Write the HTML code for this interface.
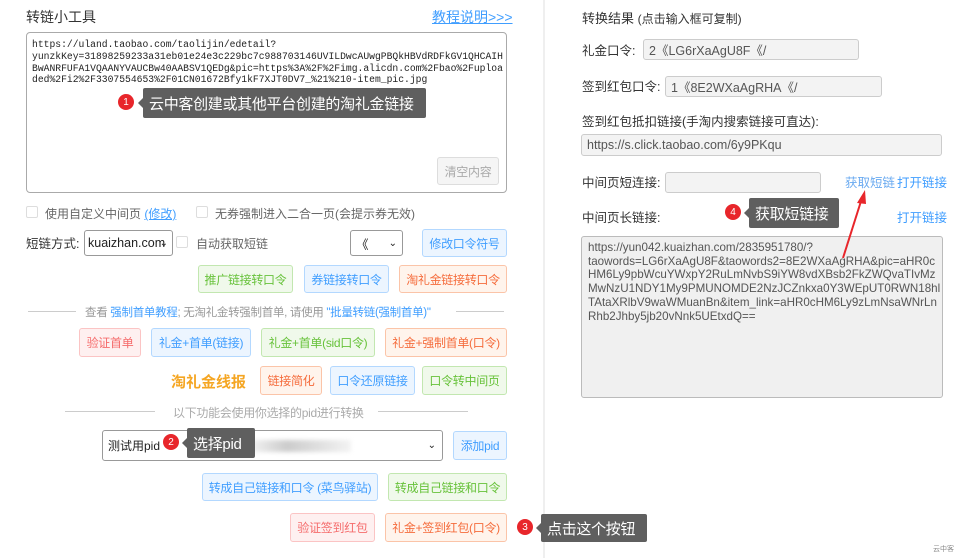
<!DOCTYPE html>
<html><head><meta charset="utf-8"><style>
*{box-sizing:border-box;margin:0;padding:0}
body{width:959px;height:558px;position:relative;background:#fff;font-family:"Liberation Sans","Noto Sans CJK SC",sans-serif;color:#333;font-size:12.5px;overflow:hidden}
.a{position:absolute;white-space:nowrap}
.btn{position:absolute;border:1px solid;border-radius:3px;font-size:12px;display:flex;align-items:center;justify-content:center;white-space:nowrap;letter-spacing:-0.3px}
.g{color:#67c23a;background:#f0f9eb;border-color:#c2e7b0}
.b{color:#409eff;background:#ecf5ff;border-color:#b3d8ff}
.o{color:#f56c3c;background:#fff4ec;border-color:#fbc4a8}
.r{color:#f56c6c;background:#fef0f0;border-color:#fbc4c4}
.tip{position:absolute;background:#5f5f5f;color:#fff;border-radius:2px;display:flex;align-items:center;padding-left:6px;font-size:15px;white-space:nowrap;letter-spacing:-0.3px}
.tip:before{content:"";position:absolute;left:-5px;top:50%;margin-top:-5px;border:5px solid transparent;border-left:0;border-right-color:#5f5f5f}
.dot{position:absolute;width:16px;height:16px;border-radius:50%;background:#e8262b;color:#fff;font-size:10px;display:flex;align-items:center;justify-content:center}
.cb{position:absolute;width:12px;height:12px;border:1px solid #ddd;border-radius:2px}
.inp{position:absolute;background:#f3f3f3;border:1px solid #ccc;border-radius:3px;font-size:12.5px;color:#555;padding-left:5px;display:flex;align-items:center;white-space:nowrap}
.line{position:absolute;height:1px;background:#ccc}
</style></head><body>
<div style="position:absolute;left:543px;top:0;width:2px;height:558px;background:#efefef"></div>

<div class="a" style="left:26px;top:7px;font-size:14px">转链小工具</div>
<div class="a" style="left:432px;top:7px;font-size:14px;color:#409eff;text-decoration:underline">教程说明&gt;&gt;&gt;</div>
<div style="position:absolute;left:26px;top:32px;width:481px;height:161px;border:1px solid #aaa;border-radius:4px;font-family:'Liberation Mono',monospace;font-size:9.7px;line-height:11.8px;padding:6px 0 0 5px;color:#222;white-space:nowrap;overflow:hidden">https://uland.taobao.com/taolijin/edetail?<br>yunzkKey=31898259233a31eb01e24e3c229bc7c988703146UVILDwcAUwgPBQkHBVdRDFkGV1QHCAIH<br>BwANRFUFA1VQAANYVAUCBw40AABSV1QEDg&amp;pic=https%3A%2F%2Fimg.alicdn.com%2Fbao%2Fuploa<br>ded%2Fi2%2F3307554653%2F01CN01672Bfy1kF7XJT0DV7_%21%210-item_pic.jpg</div>
<div class="dot" style="left:118px;top:94px">1</div>
<div class="tip" style="left:143px;top:88px;width:283px;height:30px">云中客创建或其他平台创建的淘礼金链接</div>
<div class="btn" style="left:437px;top:157px;width:62px;height:28px;color:#aaa;background:#f5f5f5;border-color:#ddd">清空内容</div>

<div class="cb" style="left:26px;top:206px"></div>
<div class="a" style="left:45px;top:205px;color:#666;font-size:12px">使用自定义中间页 <span style="color:#409eff;text-decoration:underline">(修改)</span></div>
<div class="cb" style="left:196px;top:206px"></div>
<div class="a" style="left:215px;top:205px;color:#666;font-size:12px">无券强制进入二合一页(会提示券无效)</div>

<div class="a" style="left:26px;top:233px">短链方式:</div>
<div class="inp" style="left:84px;top:230px;width:89px;height:26px;background:#fff;border-color:#999;color:#222;padding-left:3px">kuaizhan.com<span style="position:absolute;right:4px;font-size:10px">⌄</span></div>
<div class="cb" style="left:176px;top:236px"></div>
<div class="a" style="left:196px;top:235px;color:#666;font-size:12px">自动获取短链</div>
<div class="inp" style="left:350px;top:230px;width:53px;height:26px;background:#fff;border-color:#999;color:#222">《<span style="position:absolute;right:5px;font-size:10px">⌄</span></div>
<div class="btn b" style="left:422px;top:229px;width:85px;height:28px">修改口令符号</div>

<div class="btn g" style="left:198px;top:265px;width:95px;height:28px">推广链接转口令</div>
<div class="btn b" style="left:304px;top:265px;width:85px;height:28px">券链接转口令</div>
<div class="btn o" style="left:399px;top:265px;width:108px;height:28px">淘礼金链接转口令</div>

<div class="line" style="left:28px;top:311px;width:48px"></div>
<div class="a" style="left:85px;top:304px;color:#999;font-size:11.5px;letter-spacing:-0.3px">查看 <span style="color:#409eff">强制首单教程</span>; 无淘礼金转强制首单, 请使用 <span style="color:#409eff">"批量转链(强制首单)"</span></div>
<div class="line" style="left:456px;top:311px;width:48px"></div>

<div class="btn r" style="left:79px;top:328px;width:62px;height:29px">验证首单</div>
<div class="btn b" style="left:151px;top:328px;width:100px;height:29px">礼金+首单(链接)</div>
<div class="btn g" style="left:261px;top:328px;width:114px;height:29px">礼金+首单(sid口令)</div>
<div class="btn o" style="left:385px;top:328px;width:122px;height:29px">礼金+强制首单(口令)</div>

<div class="a" style="left:171px;top:371px;font-size:15px;font-weight:bold;color:#f5a623">淘礼金线报</div>
<div class="btn o" style="left:260px;top:366px;width:62px;height:29px">链接简化</div>
<div class="btn b" style="left:330px;top:366px;width:85px;height:29px">口令还原链接</div>
<div class="btn g" style="left:422px;top:366px;width:85px;height:29px">口令转中间页</div>

<div class="line" style="left:65px;top:411px;width:90px"></div>
<div class="a" style="left:173px;top:404px;color:#aaa;font-size:12px;letter-spacing:-0.3px">以下功能会使用你选择的pid进行转换</div>
<div class="line" style="left:378px;top:411px;width:90px"></div>

<div class="inp" style="left:102px;top:430px;width:341px;height:31px;background:#fff;border-color:#999;color:#222;font-size:12px">测试用pid<span style="position:absolute;left:88px;top:9px;width:160px;height:12px;background:linear-gradient(90deg,#ddd,#eee 40%,#ccc 60%,#f3f3f3);filter:blur(2px)"></span><span style="position:absolute;right:6px;font-size:10px">⌄</span></div>
<div class="dot" style="left:163px;top:434px">2</div>
<div class="tip" style="left:187px;top:428px;width:68px;height:30px">选择pid</div>
<div class="btn b" style="left:453px;top:431px;width:54px;height:29px">添加pid</div>

<div class="btn b" style="left:202px;top:473px;width:176px;height:28px">转成自己链接和口令 (菜鸟驿站)</div>
<div class="btn g" style="left:388px;top:473px;width:119px;height:28px">转成自己链接和口令</div>

<div class="btn r" style="left:290px;top:513px;width:85px;height:29px">验证签到红包</div>
<div class="btn o" style="left:385px;top:513px;width:122px;height:29px">礼金+签到红包(口令)</div>
<div class="dot" style="left:517px;top:519px">3</div>
<div class="tip" style="left:541px;top:514px;width:106px;height:28px">点击这个按钮</div>

<div class="a" style="left:582px;top:8px;font-size:13px">转换结果 <span style="font-size:12px">(点击输入框可复制)</span></div>
<div class="a" style="left:582px;top:40px">礼金口令:</div>
<div class="inp" style="left:643px;top:39px;width:216px;height:21px">2《LG6rXaAgU8F《/</div>
<div class="a" style="left:582px;top:76px">签到红包口令:</div>
<div class="inp" style="left:665px;top:76px;width:217px;height:21px">1《8E2WXaAgRHA《/</div>
<div class="a" style="left:582px;top:111px">签到红包抵扣链接(手淘内搜索链接可直达):</div>
<div class="inp" style="left:581px;top:134px;width:361px;height:22px">https://s.click.taobao.com/6y9PKqu</div>
<div class="a" style="left:582px;top:172px">中间页短连接:</div>
<div class="inp" style="left:665px;top:172px;width:156px;height:21px"></div>
<div class="a" style="left:845px;top:172px;color:#6aaaf0">获取短链</div>
<div class="a" style="left:897px;top:172px;color:#409eff">打开链接</div>
<div class="a" style="left:582px;top:207px">中间页长链接:</div>
<div class="a" style="left:897px;top:207px;color:#409eff">打开链接</div>
<div style="position:absolute;left:581px;top:236px;width:362px;height:162px;background:#f0f0f0;border:1px solid #bbb;border-radius:3px;padding:4px 0 0 6px;font-size:11.6px;line-height:13.7px;color:#555;white-space:nowrap;overflow:hidden">https://yun042.kuaizhan.com/2835951780/?<br>taowords=LG6rXaAgU8F&amp;taowords2=8E2WXaAgRHA&amp;pic=aHR0c<br>HM6Ly9pbWcuYWxpY2RuLmNvbS9iYW8vdXBsb2FkZWQvaTIvMz<br>MwNzU1NDY1My9PMUNOMDE2NzJCZnkxa0Y3WEpUT0RWN18hl<br>TAtaXRlbV9waWMuanBn&amp;item_link=aHR0cHM6Ly9zLmNsaWNrLn<br>Rhb2Jhby5jb20vNnk5UEtxdQ==</div>
<div class="dot" style="left:725px;top:204px">4</div>
<div class="tip" style="left:749px;top:198px;width:90px;height:30px">获取短链接</div>
<svg style="position:absolute;left:0;top:0" width="959" height="558"><line x1="843" y1="258" x2="862" y2="198" stroke="#e8262b" stroke-width="2"/><polygon points="865,190 857,203 866,204" fill="#e8262b"/></svg>
<div class="a" style="left:933px;top:544px;font-size:7px;color:#888">云中客</div>
</body></html>
